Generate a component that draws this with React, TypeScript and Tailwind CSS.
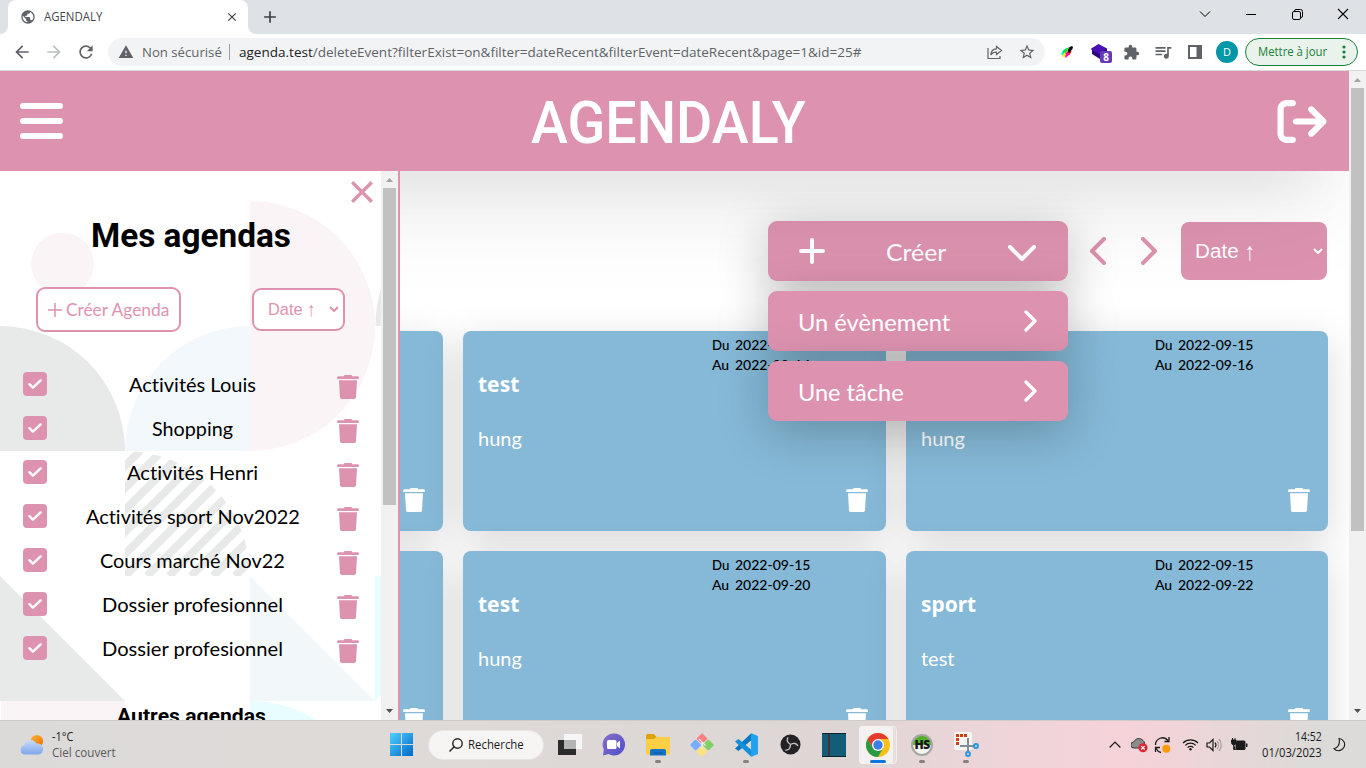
import { useLayoutEffect, useRef, useState } from "react";
import type { ReactNode } from "react";
import { MdArrowBack, MdArrowForward, MdRefresh, MdWarning, MdStarBorder, MdExtension, MdQueueMusic, MdClose, MdAdd, MdPublic } from "react-icons/md";
import { FaArrowRightFromBracket } from "react-icons/fa6";

/** Single line of text condensed or expanded to a given width. */
function Fit({ w, className = "", children }: { w: number; className?: string; children: ReactNode }) {
  const ref = useRef<HTMLSpanElement>(null);
  const [scale, setScale] = useState(1);
  useLayoutEffect(() => {
    if (ref.current) setScale(w / ref.current.offsetWidth);
  }, [w]);
  return (
    <span className={`block shrink-0 whitespace-nowrap ${className}`} style={{ width: w }}>
      <span ref={ref} className="inline-block origin-left" style={{ transform: `scaleX(${scale})` }}>
        {children}
      </span>
    </span>
  );
}

function Trash({ className = "" }: { className?: string }) {
  return (
    <svg viewBox="0 0 22 24" className={`h-6 w-[22px] shrink-0 ${className}`} fill="currentColor">
      <path d="M7.2 0h7.6v1.200h6a1 1 0 0 1 1 1v1.800H.2V2.200a1 1 0 0 1 1-1h6z" />
      <path d="M2 5.200h18l-1 17.400a1.500 1.500 0 0 1-1.500 1.400H4.500A1.500 1.500 0 0 1 3 22.600z" />
    </svg>
  );
}

function Chevron({ className = "", points, box, sw }: { className?: string; points: string; box: string; sw: number }) {
  return (
    <svg viewBox={box} className={`shrink-0 ${className}`} fill="none" stroke="currentColor" strokeWidth={sw} strokeLinecap="round" strokeLinejoin="round">
      <polyline points={points} />
    </svg>
  );
}

function Scrollbar({ thumb, className = "" }: { thumb: string; className?: string }) {
  return (
    <div className={`flex w-[17px] shrink-0 flex-col items-center bg-[#f1f1f1] ${className}`}>
      <svg viewBox="0 0 17 17" className="h-[17px] w-[17px] shrink-0">
        <path d="M5 11h7L8.500 7z" fill="#a3a3a3" />
      </svg>
      <div className={`w-[13px] bg-[#c1c1c1] ${thumb}`} />
      <svg viewBox="0 0 17 17" className="mt-auto h-[17px] w-[17px] shrink-0">
        <path d="M5 6h7L8.500 10z" fill="#505050" />
      </svg>
    </div>
  );
}

function BrowserChrome() {
  return (
    <>
      <div className="flex h-[34px] shrink-0 items-start bg-[#dee1e6]">
        <div className="relative ml-2 flex h-[34px] w-60 items-center rounded-t-lg bg-white pl-3">
          <svg viewBox="0 0 8 8" className="absolute bottom-0 -left-2 h-2 w-2"><path d="M8 0v8H0a8 8 0 0 0 8-8z" fill="#fff" /></svg>
          <svg viewBox="0 0 8 8" className="absolute -right-2 bottom-0 h-2 w-2"><path d="M0 0v8h8a8 8 0 0 1-8-8z" fill="#fff" /></svg>
          <MdPublic className="h-4 w-4 text-[#5f6368]" />
          <Fit w={58} className="ml-2 font-['Open_Sans'] text-[12px] leading-4 text-[#45494d]">AGENDALY</Fit>
          <MdClose className="ml-[123px] h-[14px] w-[14px] text-[#3c4043]" />
        </div>
        <MdAdd className="mt-[7px] ml-[12px] h-5 w-5 text-[#3c4043]" />
        <div className="ml-auto flex h-7 items-center text-black">
          <div className="flex w-[46px] justify-center"><svg viewBox="0 0 12 8" className="h-2 w-3" fill="none" stroke="currentColor"><path d="M1 1.500l5 5 5-5" /></svg></div>
          <div className="flex w-[46px] justify-center"><div className="h-px w-[10px] bg-black" /></div>
          <div className="flex w-[46px] justify-center"><svg viewBox="0 0 11 11" className="h-[11px] w-[11px]" fill="none" stroke="currentColor"><rect x=".5" y="2.500" width="8" height="8" rx="1.500" /><path d="M2.500 2.500V2A1.500 1.500 0 0 1 4 .5h4.500a2 2 0 0 1 2 2V7A1.500 1.500 0 0 1 9 8.500h-.5" /></svg></div>
          <div className="flex w-[46px] justify-center"><svg viewBox="0 0 12 12" className="h-3 w-3" fill="none" stroke="currentColor" strokeWidth="1.100"><path d="M1 1l10 10M11 1L1 11" /></svg></div>
        </div>
      </div>
      <div className="flex h-[37px] shrink-0 items-center border-b border-[#d8d8da] bg-white text-[#5f6368]">
        <MdArrowBack className="ml-3 h-5 w-5" />
        <MdArrowForward className="ml-3 h-5 w-5 text-[#bcbec1]" />
        <MdRefresh className="ml-3 h-5 w-5" />
        <div className="ml-3 flex h-7 w-[937px] shrink-0 items-center rounded-full bg-[#f1f3f4] pl-[10px] font-['Open_Sans'] text-[13.500px] leading-5">
          <MdWarning className="h-4 w-4 shrink-0" />
          <Fit w={80} className="ml-2">Non sécurisé</Fit>
          <div className="ml-[7px] h-4 w-px bg-[#9aa0a6]" />
          <Fit w={622} className="ml-[9px]"><span className="text-[#202124]">agenda.test</span>/deleteEvent?filterExist=on&amp;filter=dateRecent&amp;filterEvent=dateRecent&amp;page=1&amp;id=25#</Fit>
          <svg viewBox="0 0 16 16" className="ml-[126px] h-4 w-4 shrink-0" fill="none" stroke="currentColor" strokeWidth="1.200"><path d="M1 4v10.500h12V12M9.500 2.500l5 4-5 4V8C6.500 8 5 9 3.800 11 4 7.500 6 5 9.500 4.800z" /></svg>
          <MdStarBorder className="ml-[15px] h-[18px] w-[18px] shrink-0" />
        </div>
        <div className="ml-[6px] flex items-center">
          <div className="flex w-8 justify-center">
            <svg viewBox="0 0 14 14" className="h-[14px] w-[14px]"><path d="M1 9l2-4 4-2-1 5-3 3z" fill="#0fc" /><path d="M2.500 7.500L5 4l4-2-3 6z" fill="#1d3" /><path d="M5 9l5-5 1.500 2.500L9.500 10z" fill="#f11" /><path d="M5 10l3-3 1 3-3.500 3z" fill="#f0c" /><path d="M2 11l3-4 .8 3-1.500 2.500z" fill="#fe0" /><path d="M7.500 5.500L9.500 2l2.500-1 1 1-.5 2L9 8z" fill="#111" /></svg>
          </div>
          <div className="relative flex w-8 justify-center">
            <svg viewBox="0 0 18 18" className="h-[18px] w-[18px]"><path d="M2 5.500l7-4 8 4v6l-7 4.500-8-5z" fill="#2c0a78" /><path d="M.5 6L8.500 1l8 5L9 11z" fill="#4b0fb8" /></svg>
            <div className="absolute top-[8px] left-[17px] flex h-3 w-3 items-center justify-center rounded-[2px] bg-[#673ab7] font-['Open_Sans'] text-[10px] leading-3 font-bold text-white">8</div>
          </div>
          <div className="flex w-8 justify-center"><MdExtension className="h-[17px] w-[17px]" /></div>
          <div className="flex w-8 justify-center"><MdQueueMusic className="h-5 w-5" /></div>
          <div className="flex w-8 justify-center"><svg viewBox="0 0 14 14" className="h-[14px] w-[14px]"><path fillRule="evenodd" d="M0 0h14v14H0zM2 2v10h6.500V2z" fill="currentColor" /></svg></div>
          <div className="flex w-8 justify-center"><div className="flex h-[22px] w-[22px] items-center justify-center rounded-full bg-[#0097a7] font-['Open_Sans'] text-[11px] text-white">D</div></div>
        </div>
        <div className="ml-[2px] flex h-7 w-[113px] items-center rounded-full border border-[#188038] bg-[#e9f3ec] pl-3 text-[#188038]">
          <Fit w={69} className="font-['Open_Sans'] text-[12px] leading-4">Mettre à jour</Fit>
          <svg viewBox="0 0 4 14" className="ml-[15px] h-[14px] w-1" fill="currentColor"><circle cx="2" cy="2" r="1.600" /><circle cx="2" cy="7" r="1.600" /><circle cx="2" cy="12" r="1.600" /></svg>
        </div>
      </div>
    </>
  );
}

function Pattern() {
  return (
    <svg viewBox="0 0 381 549" className="absolute top-0 left-0 h-[549px] w-[381px]">
      <defs>
        <clipPath id="quarter"><path d="M125 405V280a125 125 0 0 1 125 125z" /></clipPath>
      </defs>
      <circle cx="62.500" cy="93" r="31.300" fill="#faf4f6" />
      <path d="M250 30a125 125 0 0 1 0 250z" fill="#faf4f6" />
      <path d="M0 155a125 125 0 0 1 125 125H0z" fill="#e8eae9" />
      <path d="M250 155v125H125a125 125 0 0 1 125-125z" fill="#f2f8fb" />
      <path d="M381 117v38h-5.500c0-13 2-26 5.500-38z" fill="#e8eae9" />
      <g clipPath="url(#quarter)" stroke="#e8eae9" strokeWidth="8">
        {[-110, -88, -66, -44, -22, 0, 22, 44, 66, 88, 110].map((d) => (
          <path key={d} d={`M${125 + d} 405l140-140`} />
        ))}
      </g>
      <path d="M0 405l125 125H0z" fill="#e8eae9" />
      <path d="M250 405l125 125H250z" fill="#f2f7fa" />
      <path d="M375 405h6v119l-6 6z" fill="#e8fdff" />
      <path d="M1 530h124v19H1z" fill="#faf4f6" />
      <path d="M250 530a125 125 0 0 1 66 19h-66z" fill="#e8fdff" />
    </svg>
  );
}

const agendas: [string, number][] = [
  ["Activités Louis", 127],
  ["Shopping", 81],
  ["Activités Henri", 131],
  ["Activités sport Nov2022", 214],
  ["Cours marché Nov22", 185],
  ["Dossier profesionnel", 181],
  ["Dossier profesionnel", 181],
];

function Sidebar() {
  return (
    <aside className="absolute top-[100px] left-0 z-30 flex h-[549px] w-[400px] overflow-hidden border-r-2 border-[#dd93b0] bg-white">
      <Pattern />
      <div className="relative flex w-[381px] shrink-0 flex-col">
        <svg viewBox="0 0 22 22" className="mt-[10px] ml-[351px] h-[22px] w-[22px] shrink-0" stroke="#dd93b0" strokeWidth="3.400"><path d="M1.200 1.200l19.600 19.600M20.800 1.200L1.200 20.800" /></svg>
        <h2 className="mt-[9px] ml-[91px] font-['Roboto'] text-[34px] leading-[46px] font-bold text-black"><Fit w={200}>Mes agendas</Fit></h2>
        <div className="mt-[29px] flex h-[45px] items-center pl-9">
          <button className="flex h-[45px] w-[145px] items-center rounded-[9px] border-2 border-[#dd93b0] bg-white pl-[10px] text-[#dd93b0]">
            <svg viewBox="0 0 14 14" className="h-[14px] w-[14px]" stroke="currentColor" strokeWidth="1.500"><path d="M7 0v14M0 7h14" /></svg>
            <Fit w={103} className="-mt-[2px] ml-1 font-['Lato'] text-[18px] leading-6">Créer Agenda</Fit>
          </button>
          <button className="ml-[71px] flex h-[43px] w-[93px] items-center rounded-[9px] border-2 border-[#dd93b0] bg-white pl-[14px] text-[#dd93b0]">
            <Fit w={47} className="font-['Liberation_Sans'] text-[16px] leading-5">Date <span className="inline-block scale-y-125">↑</span></Fit>
            <Chevron box="0 0 10 7" points="1.500,1.500 5,5 8.500,1.500" sw={2} className="ml-[14px] h-[7px] w-[10px]" />
          </button>
        </div>
        <div className="mt-[30px] flex flex-col">
          {agendas.map(([name, w], i) => (
            <div key={i} className="flex h-11 items-center pl-[23px]">
              <div className="-mt-px flex h-6 w-6 items-center justify-center rounded-[4px] bg-[#dd93b0]">
                <svg viewBox="0 0 14 10" className="h-[10px] w-[14px]" fill="none" stroke="#fff" strokeWidth="2.400" strokeLinecap="round" strokeLinejoin="round"><path d="M1.400 5.200l3.500 3.400 7.700-7.200" /></svg>
              </div>
              <div className="flex w-[291px] justify-center">
                <Fit w={w} className="font-['Lato'] text-[20px] leading-6 text-black [font-variant-ligatures:none]">{name}</Fit>
              </div>
              <Trash className="mt-[5px] -ml-px text-[#dd93b0]" />
            </div>
          ))}
        </div>
        <h3 className="mt-[32px] ml-[117px] font-['Roboto'] text-[21px] leading-7 font-bold text-black"><Fit w={149}>Autres agendas</Fit></h3>
      </div>
      <Scrollbar thumb="h-[317px]" className="relative" />
    </aside>
  );
}

type CardData = { title: string; text: string; to: string };
const cards: CardData[] = [
  { title: "test", text: "hung", to: "2022-09-16" },
  { title: "test", text: "hung", to: "2022-09-14" },
  { title: "test", text: "hung", to: "2022-09-16" },
  { title: "test", text: "hung", to: "2022-09-18" },
  { title: "test", text: "hung", to: "2022-09-20" },
  { title: "sport", text: "test", to: "2022-09-22" },
];

function Card({ title, text, to }: CardData) {
  return (
    <article className="flex h-[200px] flex-col rounded-lg bg-[#85b9d7] px-[15px] pt-1 text-white shadow-[0_10px_40px_rgba(0,0,0,0.15)]">
      <div className="ml-[234px] font-['Lato'] text-[14px] leading-5 font-medium text-black">
        <div className="flex"><Fit w={17}>Du</Fit><Fit w={75} className="ml-[6px]">2022-09-15</Fit></div>
        <div className="flex"><Fit w={17}>Au</Fit><Fit w={75} className="ml-[6px]">{to}</Fit></div>
      </div>
      <h4 className="-mt-[7px] font-['Noto_Sans'] text-[22px] leading-[30px] font-bold"><Fit w={title === "test" ? 41 : 55}>{title}</Fit></h4>
      <p className="mt-[28px] font-['Lato'] text-[20px] leading-6"><Fit w={text === "hung" ? 44 : 34}>{text}</Fit></p>
      <Trash className="mt-[38px] mr-[3px] self-end" />
    </article>
  );
}

const raised = "bg-[#dd93b0] rounded-[9px] shadow-[0_10px_50px_rgba(0,0,0,0.25)]";

function Main() {
  return (
    <main className="h-[549px] w-[1349px] overflow-hidden bg-white">
      <div className="flex h-[160px] items-start pt-[50px]">
        <div className="relative z-10 ml-[768px] w-[300px] font-['Lato'] text-[24px] leading-[30px] text-white">
          <button className={`flex h-[60px] w-full items-center pl-[30px] ${raised}`}>
            <svg viewBox="0 0 28 28" className="h-7 w-7" stroke="currentColor" strokeWidth="4" strokeLinecap="round"><path d="M14 3v22M3 14h22" /></svg>
            <Fit w={60} className="mt-px ml-[59px]">Créer</Fit>
            <Chevron box="0 0 28 16" points="2,2 14,14 26,2" sw={4} className="mt-1 ml-[63px] h-4 w-7" />
          </button>
          <div className="absolute top-[70px] left-0 flex w-full flex-col gap-[10px]">
            <button className={`flex h-[60px] items-center pl-[30px] ${raised}`}>
              <Fit w={152} className="mt-px">Un évènement</Fit>
              <Chevron box="0 0 13 22" points="2,2 11,11 2,20" sw={3.200} className="ml-[74px] h-[22px] w-[13px]" />
            </button>
            <button className={`flex h-[60px] items-center pl-[30px] ${raised}`}>
              <Fit w={106} className="mt-px">Une tâche</Fit>
              <Chevron box="0 0 13 22" points="2,2 11,11 2,20" sw={3.200} className="ml-[120px] h-[22px] w-[13px]" />
            </button>
          </div>
        </div>
        <Chevron box="0 0 16 28" points="14,2 2,14 14,26" sw={4} className="mt-4 ml-[22px] h-7 w-4 text-[#dd93b0]" />
        <Chevron box="0 0 16 28" points="2,2 14,14 2,26" sw={4} className="mt-4 ml-[35px] h-7 w-4 text-[#dd93b0]" />
        <button className="mt-px ml-6 flex h-[58px] w-[146px] items-center rounded-lg bg-[#dd93b0] pl-[13px] text-white">
          <Fit w={60} className="font-['Liberation_Sans'] text-[20px] leading-6">Date <span className="inline-block scale-y-125">↑</span></Fit>
          <Chevron box="0 0 10 7" points="1.500,1.500 5,5 8.500,1.500" sw={2} className="ml-[59px] h-[7px] w-[10px]" />
        </button>
      </div>
      <div className="grid w-[1349px] grid-cols-[423px_423px_422px] gap-5 px-5">
        {cards.map((c, i) => <Card key={i} {...c} />)}
      </div>
    </main>
  );
}

function Cell({ children, mark = "" }: { children: ReactNode; mark?: string }) {
  return (
    <div className="relative flex h-[47px] w-11 shrink-0 items-center justify-center">
      {children}
      {mark && <div className={`absolute bottom-[5px] h-[3px] rounded-full ${mark}`} />}
    </div>
  );
}

function Taskbar() {
  return (
    <footer className="flex h-12 shrink-0 items-center border-t border-[#cfcbca] bg-[linear-gradient(90deg,#dcdad9_0%,#dedad8_30%,#ddd6d4_62%,#ead5d8_70%,#f5d3d9_82%,#f0d4d8_86%,#dddad8_95%,#dbdbd9_100%)] font-['Open_Sans'] text-[12px] leading-4 text-[#1b1b1b]">
      <svg viewBox="0 0 26 22" className="ml-5 h-[22px] w-[25px] shrink-0">
        <defs>
          <linearGradient id="cloud" x1="0" y1="0" x2="0" y2="1"><stop stopColor="#c9dcfb" /><stop offset="1" stopColor="#7ea6ea" /></linearGradient>
          <linearGradient id="sun" x1="0" y1="0" x2="1" y2="1"><stop stopColor="#fbb92c" /><stop offset="1" stopColor="#ee6a0b" /></linearGradient>
        </defs>
        <circle cx="17.500" cy="7" r="6.500" fill="url(#sun)" />
        <path d="M5.500 21a5 5 0 0 1-.8-9.900A6.500 6.500 0 0 1 17 9.500 5.800 5.800 0 0 1 19.500 21z" fill="url(#cloud)" />
      </svg>
      <div className="ml-[7px] w-[64px] shrink-0">
        <Fit w={21}>-1°C</Fit>
        <Fit w={64} className="text-[#5b5958]">Ciel couvert</Fit>
      </div>
      <svg viewBox="0 0 23 23" className="ml-[274px] h-[23px] w-[23px] shrink-0">
        <defs><linearGradient id="win" x1="0" y1="0" x2="1" y2="1"><stop stopColor="#4fd0fd" /><stop offset="1" stopColor="#0069cb" /></linearGradient></defs>
        <path d="M0 0h11v11H0zM12 0h11v11H12zM0 12h11v11H0zM12 12h11v11H12z" fill="url(#win)" />
      </svg>
      <div className="ml-[15px] flex h-[30px] w-[116px] shrink-0 items-center rounded-full border border-[#e9e7e6] bg-[#f6f5f4] pl-5">
        <svg viewBox="0 0 14 14" className="h-[14px] w-[14px]" fill="none" stroke="#222" strokeWidth="1.400"><circle cx="8.500" cy="5.500" r="4.700" /><path d="M5 9l-4.500 4.500" /></svg>
        <Fit w={56} className="ml-[5px]">Recherche</Fit>
      </div>
      <div className="ml-1 flex shrink-0">
        <Cell>
          <svg viewBox="0 0 24 24" className="h-6 w-6"><rect y="7" width="18" height="15" fill="#2c2c2c" /><rect x="6" y="1" width="18" height="15" fill="#f6f6f6" /><rect x="6" y="7" width="12" height="9" fill="#b4b4b4" /></svg>
        </Cell>
        <Cell>
          <svg viewBox="0 0 24 24" className="h-6 w-6"><defs><linearGradient id="chat" x1="0" y1="0" x2="1" y2="1"><stop stopColor="#8b6fc9" /><stop offset="1" stopColor="#4a4fc8" /></linearGradient></defs><path d="M12 .5a11 11 0 1 1-5.500 20.500L1 22.500l.8-6A11 11 0 0 1 12 .5z" fill="url(#chat)" /><rect x="5" y="7" width="9.500" height="9" rx="1.500" fill="#fff" /><path d="M15 10l3-2.500v8L15 13z" fill="#fff" /></svg>
        </Cell>
        <Cell mark="w-[6px] bg-[#858280]">
          <svg viewBox="0 0 24 22" className="h-[22px] w-6"><path d="M0 1.500A1.500 1.500 0 0 1 1.500 0H8l2.500 3H22a2 2 0 0 1 2 2v3H0z" fill="#e0a20c" /><path d="M0 5h8l2.500-2H22a2 2 0 0 1 2 2v15.500H0z" fill="#fdcf45" /><path d="M4 21.500V17a2 2 0 0 1 2-2h12a2 2 0 0 1 2 2v4.500z" fill="#1272c4" /><path d="M7 18.500h10v1H7z" fill="#0c559c" /></svg>
        </Cell>
        <Cell>
          <svg viewBox="0 0 24 24" className="h-6 w-6"><g transform="rotate(45 12 12)"><rect x="3.500" y="3.500" width="8" height="8" rx="1" fill="#fc8080" /><rect x="12.500" y="3.500" width="8" height="8" rx="1" fill="#7fd064" /><rect x="3.500" y="12.500" width="8" height="8" rx="1" fill="#76adfc" /><rect x="12.500" y="12.500" width="8" height="8" rx="1" fill="#ffe27d" /></g><path d="M9 6l6.500 6.500M12 9v7" stroke="#f1eeee" strokeWidth="1.200" /></svg>
        </Cell>
        <Cell mark="w-[6px] bg-[#858280]">
          <svg viewBox="0 0 24 24" className="h-6 w-6"><path d="M1 15.500l16-15v7L4.500 18z" fill="#0878c4" /><path d="M1 8.500l16 15v-7L4.500 6z" fill="#148fdc" /><path d="M17 0l7 3v18l-7 3z" fill="#22a2ee" /></svg>
        </Cell>
        <Cell>
          <svg viewBox="0 0 22 22" className="h-[21px] w-[21px]"><circle cx="11" cy="11" r="10.500" fill="#232124" /><g fill="none" stroke="#c8c6c8" strokeWidth="1.400"><path d="M11 11C7.500 9 6.500 6 8.500 3.500" /><path d="M11 11C14.500 9 17.600 9.600 18.700 12.600" /><path d="M11 11C11 15 9 17.400 5.500 16.800" /></g></svg>
        </Cell>
        <Cell><div className="flex h-6 w-6 border-y border-[#0a2730] bg-[#135d78]"><div className="ml-[6px] w-[2px] bg-[#3d3338]" /></div></Cell>
        <Cell mark="w-4 bg-[#0a74da]">
          <div className="absolute top-[5px] left-[3px] h-[38px] w-[38px] rounded-[4px] border border-[#f3efee] bg-[#e6dfdd]" />
          <div className="absolute top-[5px] left-[3px] h-[38px] w-[34px] rounded-[4px] bg-[#f4f1f0]" />
          <svg viewBox="0 0 24 24" className="relative h-6 w-6"><circle cx="12" cy="12" r="12" fill="#fbc116" /><path d="M1.600 6a12 12 0 0 1 20.800 0H12L7 15z" fill="#e33b2e" /><path d="M1.600 6A12 12 0 0 0 12 24l5.200-9H7z" fill="#289b49" /><circle cx="12" cy="12" r="6" fill="#fff" /><circle cx="12" cy="12" r="4.700" fill="#3b7ded" /></svg>
        </Cell>
        <Cell mark="w-[6px] bg-[#858280]">
          <div className="flex h-[22px] w-[22px] items-center justify-center rounded-full border-2 border-[#a3a7a0] bg-[linear-gradient(#4fae2b_0%,#58b532_48%,#e9e9e7_50%,#f7f7f7_100%)] text-[12px] leading-none font-extrabold tracking-[-0.5px] text-[#171717]">HS</div>
        </Cell>
        <Cell mark="w-[6px] bg-[#858280]">
          <svg viewBox="0 0 25 25" className="h-[25px] w-[25px]"><rect width="18" height="18" rx="2" fill="#f5f5f5" /><path d="M3.500 13V3.500H13" fill="none" stroke="#d2400d" strokeWidth="3" strokeDasharray="3 1" /><path d="M6 14h14M14 6v14" stroke="#858b92" strokeWidth="2" /><g fill="none" stroke="#2196e0" strokeWidth="1.800"><circle cx="22" cy="14" r="2" /><circle cx="14" cy="22" r="2" /></g></svg>
        </Cell>
      </div>
      <div className="ml-auto flex shrink-0 items-center">
        <svg viewBox="0 0 12 8" className="h-2 w-3" fill="none" stroke="#1b1b1b" strokeWidth="1.200"><path d="M.6 6.500L6 1l5.400 5.500" /></svg>
        <svg viewBox="0 0 17 16" className="ml-[10px] h-4 w-[17px]"><path d="M3 11a3 3 0 0 1-.5-6C5 1 9 .5 12 3.500c2 1 2 5 0 7.500z" fill="#8c8c8c" stroke="#333" /><circle cx="12" cy="10.800" r="4.500" fill="#dc2535" /><path d="M10.300 9.100l3.400 3.400M13.700 9.100l-3.400 3.400" stroke="#fff" strokeWidth="1.200" /></svg>
        <svg viewBox="0 0 17 18" className="ml-[6px] h-[18px] w-[17px]" fill="none" stroke="#1b1b1b" strokeWidth="1.300"><path d="M1.500 9A7 7 0 0 1 14 4.500M15 1v4.500h-4.500M1.500 16v-4.500H6M2 12.500c1 2 3 3.500 5 4" /><circle cx="12.300" cy="12.700" r="4" fill="#fb9a0b" stroke="none" /></svg>
        <svg viewBox="0 0 17 13" className="ml-[11px] h-[13px] w-[17px]" fill="none" stroke="#1b1b1b" strokeWidth="1.200"><path d="M1 5a10.500 10.500 0 0 1 15 0M3.300 7.300a7.300 7.300 0 0 1 10.400 0M5.600 9.600a4 4 0 0 1 5.800 0" /><circle cx="8.500" cy="11.300" r="1.200" fill="#1b1b1b" stroke="none" /></svg>
        <svg viewBox="0 0 17 14" className="ml-[7px] h-[14px] w-[17px]" fill="none" stroke="#1b1b1b" strokeWidth="1.200"><path d="M1 5h2.500L7 1.500v11L3.500 9H1z" /><path d="M9 4.700a3.500 3.500 0 0 1 0 4.600" /><path d="M11 3a6 6 0 0 1 0 8M13 1a9 9 0 0 1 0 12" stroke="#a79a9b" /></svg>
        <svg viewBox="0 0 17 13" className="ml-[8px] h-[13px] w-[17px]"><path d="M5.500 2.500H13A1.500 1.500 0 0 1 14.500 4v6.500A1.500 1.500 0 0 1 13 12H6a1.500 1.500 0 0 1-1.500-1.500V7M15 5.500h1.500v3.500H15z" fill="#1b1b1b" /><path d="M1.500 0v2M4 0v2M.5 2h4.500v2.500a2.200 2.200 0 0 1-4.500 0zM2.700 6v5.500h2" stroke="#1b1b1b" fill="#1b1b1b" /></svg>
        <div className="ml-[14px] flex w-[60px] flex-col items-end">
          <Fit w={27}>14:52</Fit>
          <Fit w={60}>01/03/2023</Fit>
        </div>
        <svg viewBox="0 0 14 15" className="mr-[20px] ml-[11px] h-[15px] w-[13px]" fill="none" stroke="#1b1b1b" strokeWidth="1.200"><path d="M6.500 1a6.600 6.600 0 1 1-5.500 11C5 11.500 8 7 6.500 1z" /></svg>
      </div>
    </footer>
  );
}

export default function App() {
  return (
    <div className="flex h-[768px] w-[1366px] flex-col overflow-hidden bg-white">
      <BrowserChrome />
      <div className="relative flex h-[649px] shrink-0">
        <div className="flex w-[1349px] flex-col overflow-hidden">
          <header className="relative z-20 flex h-[100px] shrink-0 items-center bg-[#dd93b0] pl-5 text-white shadow-[0_50px_100px_-20px_rgba(0,0,0,0.11),0_30px_60px_-30px_rgba(0,0,0,0.12)]">
            <div className="flex w-[43px] shrink-0 flex-col gap-[9px]">
              <div className="h-[6px] rounded-full bg-white" />
              <div className="h-[6px] rounded-full bg-white" />
              <div className="h-[6px] rounded-full bg-white" />
            </div>
            <h1 className="mt-[3px] ml-[468px] font-['Roboto'] text-[59px] leading-[80px] font-medium"><Fit w={275}>AGENDALY</Fit></h1>
            <FaArrowRightFromBracket className="ml-[471px] h-[49px] w-[50px] shrink-0" />
          </header>
          <Main />
        </div>
        <Scrollbar thumb="h-[443px]" />
        <Sidebar />
      </div>
      <Taskbar />
    </div>
  );
}
